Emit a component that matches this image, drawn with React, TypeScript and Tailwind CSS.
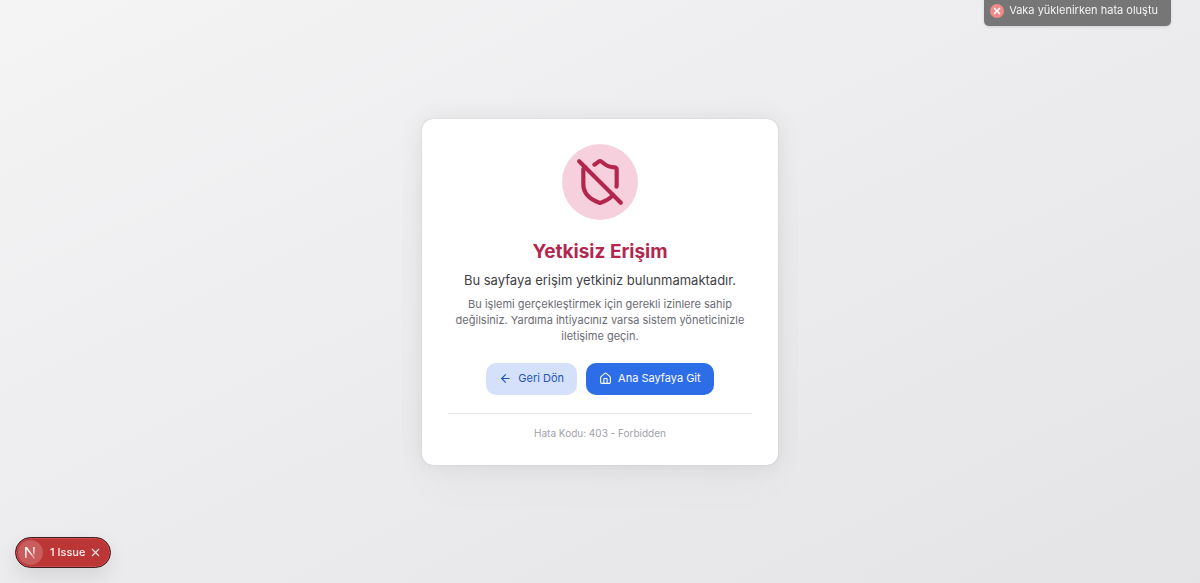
import { ArrowLeft, House, ShieldOff, X } from "lucide-react";

function Toast() {
  return (
    <div
      role="alert"
      className="fixed right-[29px] -top-[5px] flex h-[31px] items-center gap-[5px] rounded-[5px] bg-[#767676] pr-[13px] pl-[6px] text-[11px] text-[#f4f4f5] shadow-sm"
    >
      <span className="flex size-[14px] items-center justify-center rounded-full bg-[#ef8a87]">
        <X size={10} strokeWidth={4} className="text-white" aria-hidden="true" />
      </span>
      <span>Vaka yüklenirken hata oluştu</span>
    </div>
  );
}

function IssueBadge() {
  return (
    <div className="fixed bottom-[15px] left-[15px] flex h-[31px] w-[96px] items-center rounded-full border border-[#3b2023] bg-[#bd3636] pl-[2px] text-[11px] font-medium text-[#ffeeee] shadow-[inset_0_0_0_1px_#d04a4d,0_8px_20px_rgba(0,0,0,0.1)]">
      <span className="flex size-[25px] items-center justify-center rounded-full bg-[#c95c5c]">
        <svg viewBox="0 0 12 12" className="size-[13px]" fill="none" aria-hidden="true">
          <defs>
            <linearGradient id="n-diagonal" x1="5" y1="5" x2="10" y2="12" gradientUnits="userSpaceOnUse">
              <stop stopColor="#fff" />
              <stop offset="1" stopColor="#fff" stopOpacity="0.3" />
            </linearGradient>
            <linearGradient id="n-stem" x1="9" y1="1" x2="9" y2="10" gradientUnits="userSpaceOnUse">
              <stop stopColor="#fff" />
              <stop offset="1" stopColor="#fff" stopOpacity="0.3" />
            </linearGradient>
          </defs>
          <path d="M1 1h1.7l7.6 10.2-1 .8L2.4 3v8H1z" fill="url(#n-diagonal)" />
          <path d="M8.4 1h1.4v7.8L8.4 7z" fill="url(#n-stem)" />
        </svg>
      </span>
      <button type="button" className="ml-[7px] whitespace-nowrap">1 Issue</button>
      <button type="button" aria-label="Kapat" className="ml-[4px]">
        <X size={13} strokeWidth={2} />
      </button>
    </div>
  );
}

export default function App() {
  return (
    <div className="flex min-h-screen items-center justify-center bg-linear-to-br from-[#f4f4f5] to-[#e4e4e7] p-4 font-[Inter,sans-serif]">
      <main className="flex w-full max-w-[356px] flex-col items-center rounded-[11px] bg-white px-[26px] pt-[25px] pb-[26px] text-center shadow-[0_0_24px_rgba(0,0,0,0.08),0_24px_48px_rgba(0,0,0,0.02),0_0_1px_rgba(0,0,0,0.3)]">
        <div className="flex size-[76px] items-center justify-center rounded-full bg-[#f6d1dd]">
          <ShieldOff size={50} className="text-[#b3264e]" aria-hidden="true" />
        </div>
        <h1 className="mt-[19px] text-[19px] leading-[26px] font-bold text-[#b3264e]">Yetkisiz Erişim</h1>
        <p className="mt-[5px] text-[13px] leading-5 text-[#3f3f46]">Bu sayfaya erişim yetkiniz bulunmamaktadır.</p>
        <p className="mt-[6px] text-[11px] leading-4 text-[#6b6b74]">
          Bu işlemi gerçekleştirmek için gerekli izinlere sahip değilsiniz. Yardıma ihtiyacınız varsa sistem yöneticinizle
          iletişime geçin.
        </p>
        <div className="mt-[19px] flex gap-[9px] text-[11px]">
          <button type="button" className="flex h-8 items-center gap-[6px] rounded-[10px] bg-[#d5e1fa] px-[13px] text-[#2454b8]">
            <ArrowLeft size={13} aria-hidden="true" />
            Geri Dön
          </button>
          <button type="button" className="flex h-8 items-center gap-[6px] rounded-[10px] bg-[#2e6de8] px-[13px] text-white">
            <House size={13} aria-hidden="true" />
            Ana Sayfaya Git
          </button>
        </div>
        <footer className="mt-[18px] w-full border-t border-[#e4e4e7] pt-[13px] text-[10px] leading-3 text-[#a1a1aa]">
          Hata Kodu: 403 - Forbidden
        </footer>
      </main>
      <Toast />
      <IssueBadge />
    </div>
  );
}
